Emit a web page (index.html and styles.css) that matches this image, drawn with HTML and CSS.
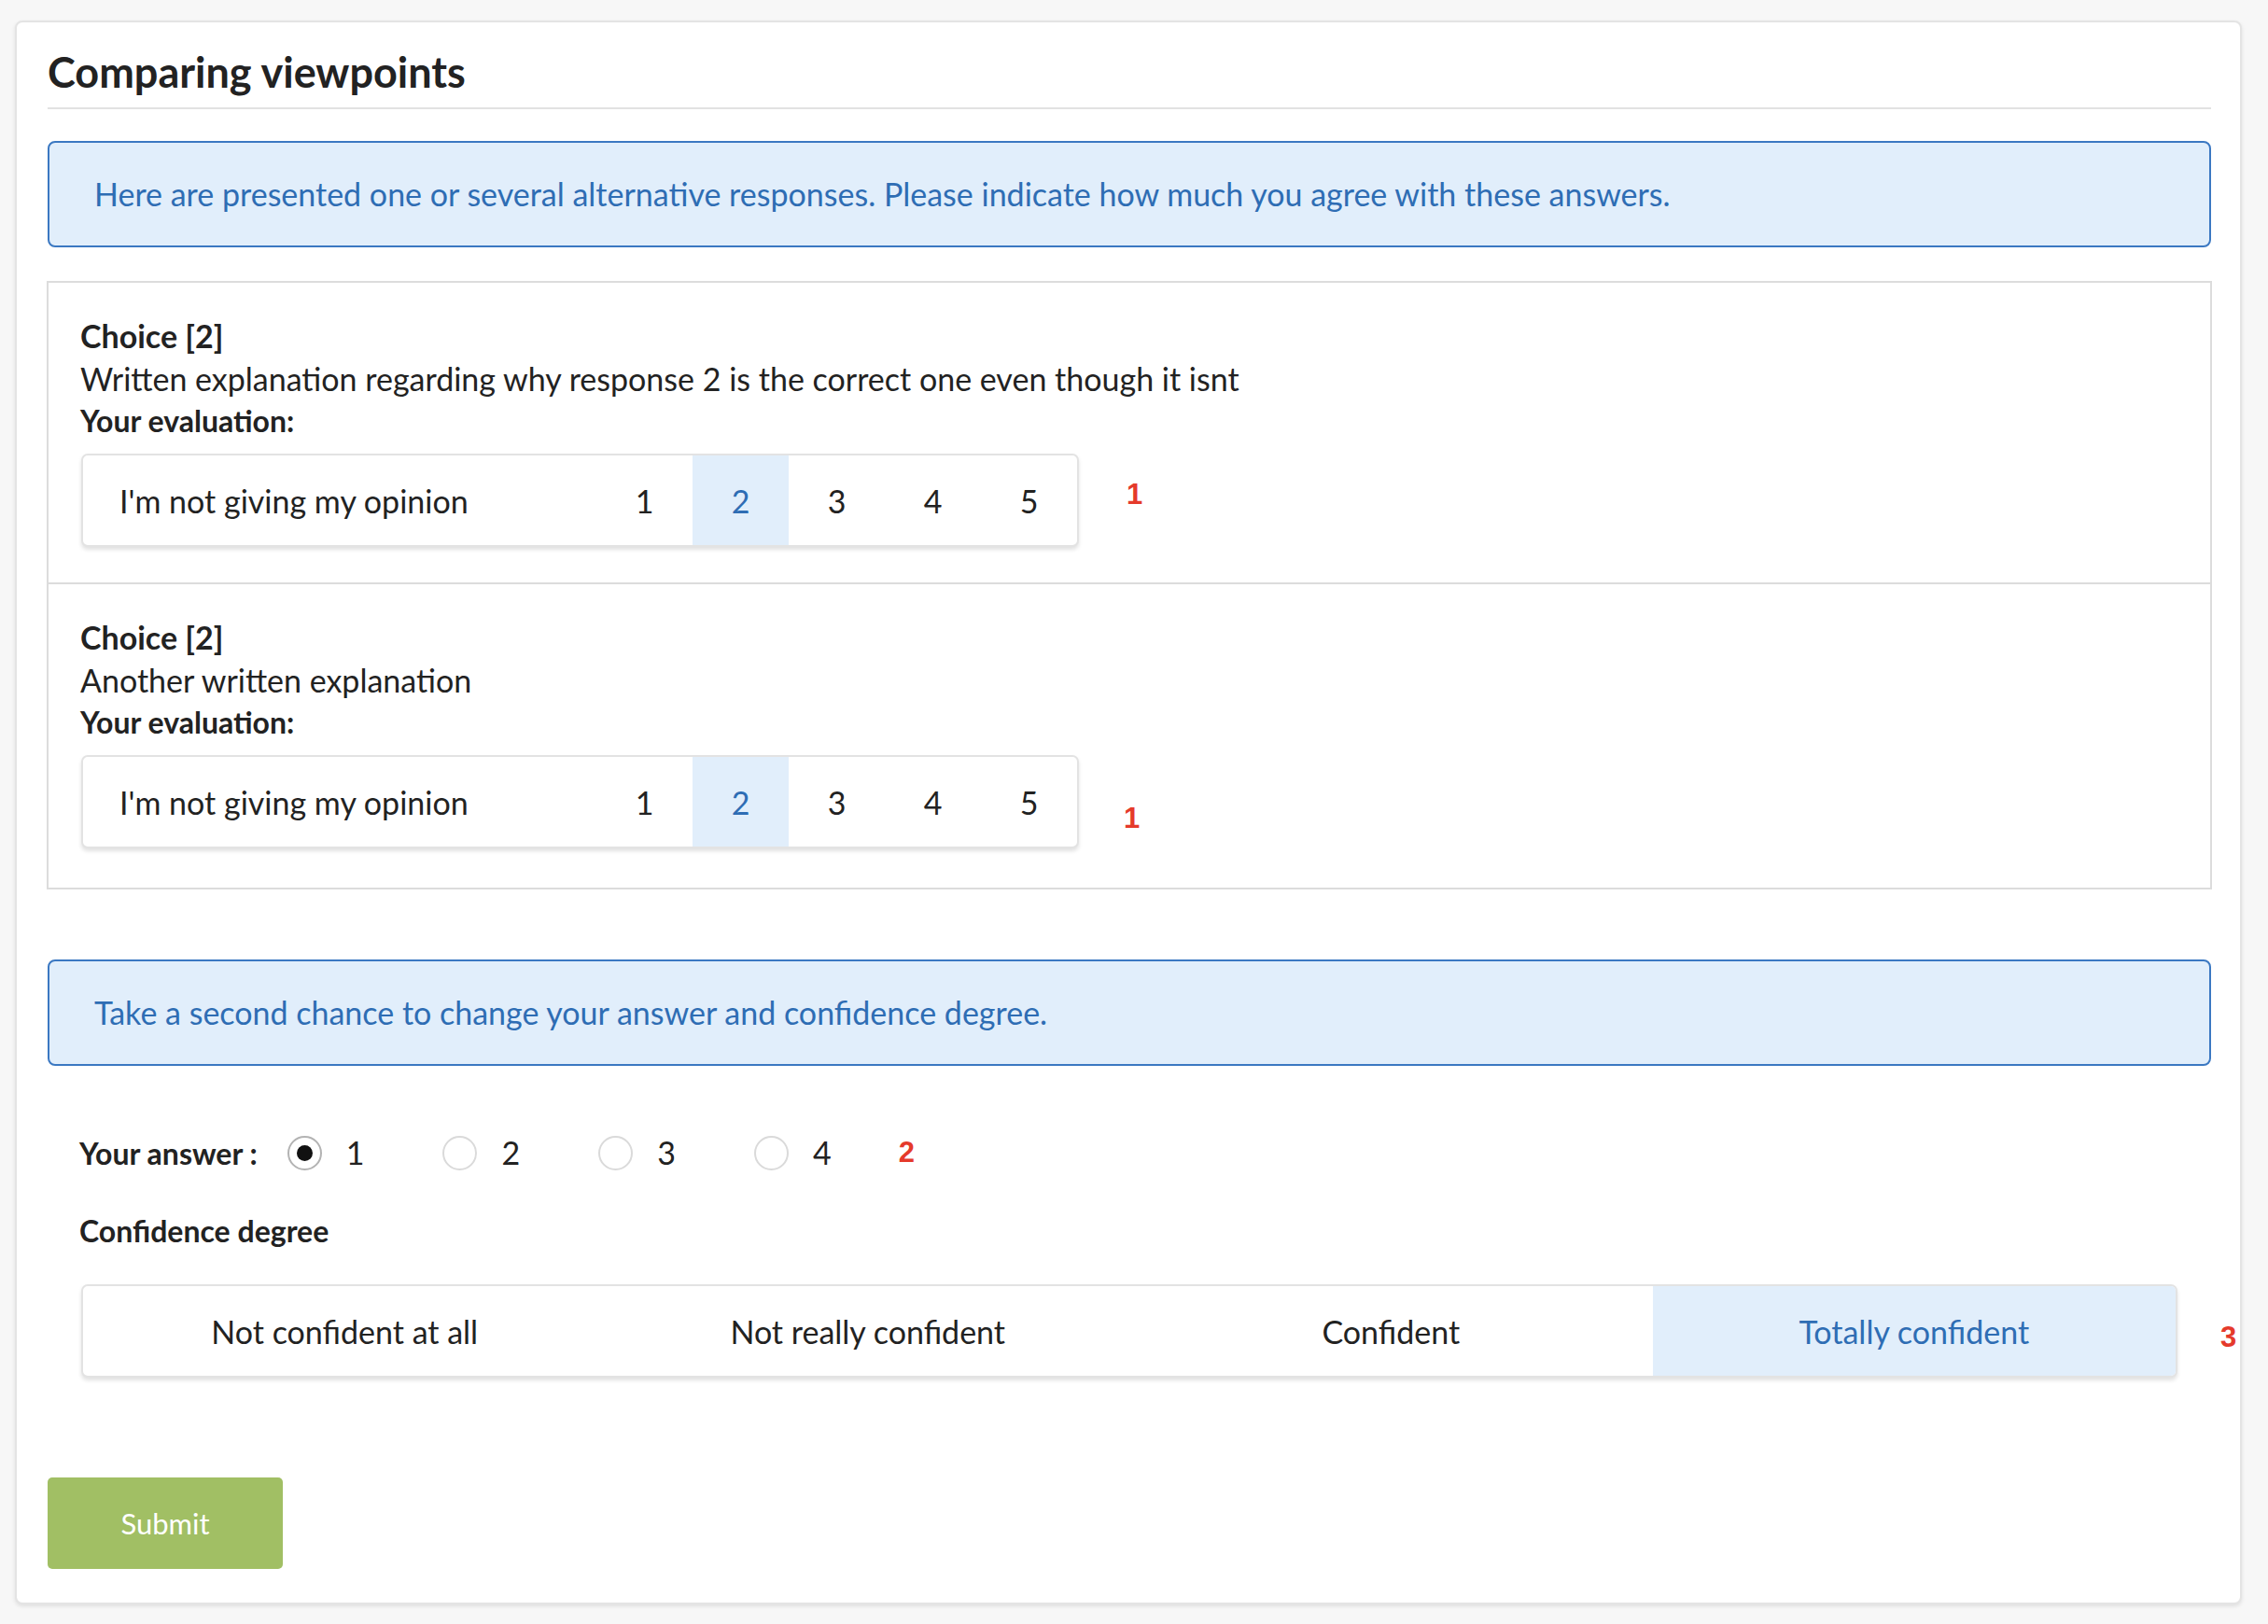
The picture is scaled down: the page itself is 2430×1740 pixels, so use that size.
FILE: index.html
```html
<!DOCTYPE html>
<html lang="en">
<head>
<meta charset="utf-8">
<title>Comparing viewpoints</title>
<link rel="stylesheet" href="styles.css">
</head>
<body>
<div class="card">
  <h2 class="title">Comparing viewpoints</h2>

  <div class="info">Here are presented one or several alternative responses. Please indicate how much you agree with these answers.</div>

  <div class="choices">
    <div class="choice">
      <div class="choice-name">Choice [2]</div>
      <div class="choice-text">Written explanation regarding why response 2 is the correct one even though it isnt</div>
      <div class="eval-label">Your evaluation:</div>
      <div class="eval-row">
        <div class="scale">
          <div class="scale-label">I'm not giving my opinion</div>
          <div class="scale-num">1</div>
          <div class="scale-num is-selected">2</div>
          <div class="scale-num">3</div>
          <div class="scale-num">4</div>
          <div class="scale-num">5</div>
        </div>
        <span class="mark mark-eval">1</span>
      </div>
    </div>
    <div class="choice">
      <div class="choice-name">Choice [2]</div>
      <div class="choice-text">Another written explanation</div>
      <div class="eval-label">Your evaluation:</div>
      <div class="eval-row">
        <div class="scale">
          <div class="scale-label">I'm not giving my opinion</div>
          <div class="scale-num">1</div>
          <div class="scale-num is-selected">2</div>
          <div class="scale-num">3</div>
          <div class="scale-num">4</div>
          <div class="scale-num">5</div>
        </div>
        <span class="mark mark-eval-low">1</span>
      </div>
    </div>
  </div>

  <div class="info info-second">Take a second chance to change your answer and confidence degree.</div>

  <div class="second">
    <div class="answer-row">
      <span class="answer-label">Your answer :</span>
      <label class="radio-item"><span class="radio is-checked"></span><span class="radio-num">1</span></label>
      <label class="radio-item"><span class="radio"></span><span class="radio-num">2</span></label>
      <label class="radio-item"><span class="radio"></span><span class="radio-num">3</span></label>
      <label class="radio-item"><span class="radio"></span><span class="radio-num">4</span></label>
      <span class="mark mark-answer">2</span>
    </div>

    <div class="conf-label">Confidence degree</div>

    <div class="conf-row">
      <div class="conf-scale">
        <div class="conf-cell">Not confident at all</div>
        <div class="conf-cell">Not really confident</div>
        <div class="conf-cell">Confident</div>
        <div class="conf-cell is-selected">Totally confident</div>
      </div>
      <span class="mark mark-conf">3</span>
    </div>
  </div>

  <button class="submit" type="button">Submit</button>
</div>
</body>
</html>
```

FILE: styles.css
```css
body {
  margin: 0;
  background: #f7f7f7;
  font-family: Lato, "Noto Sans", sans-serif;
  color: #222;
}

.card {
  margin: 22px 28px 25px 16px;
  background: #fff;
  border: 2px solid #e4e4e4;
  border-radius: 8px;
  padding: 26px 31px 36px 33px;
  box-shadow: 0 2px 4px rgba(0, 0, 0, 0.1);
}

.title {
  margin: 0;
  font-size: 45px;
  font-weight: 700;
  line-height: 55px;
  padding-bottom: 10px;
  border-bottom: 2px solid #e2e2e2;
}

.info {
  margin-top: 34px;
  border: 2px solid #3b78c2;
  border-radius: 8px;
  background: #e1eefb;
  color: #2e6db4;
  font-size: 34px;
  line-height: 42px;
  padding: 34px 48px;
}

.info-second {
  margin-top: 75px;
}

.choices {
  margin: 36px -1px 0;
  border: 2px solid #dcdcdc;
}

.choice {
  padding: 34px 34px 38px;
}

.choice + .choice {
  border-top: 2px solid #dcdcdc;
  padding-bottom: 42px;
}

.choice-name {
  font-size: 34px;
  font-weight: 700;
  line-height: 46px;
}

.choice-text {
  font-size: 34px;
  line-height: 46px;
}

.eval-label {
  font-size: 32px;
  font-weight: 700;
  line-height: 44px;
}

.eval-row {
  display: flex;
  align-items: flex-start;
  margin-top: 13px;
}

.scale,
.conf-scale {
  display: flex;
  box-sizing: border-box;
  height: 100px;
  border: 2px solid #e3e3e3;
  border-radius: 7px;
  box-shadow: 0 3px 4px rgba(0, 0, 0, 0.12);
  overflow: hidden;
  background: #fff;
  flex-shrink: 0;
}

.scale {
  margin-left: 1px;
}

.scale-label {
  width: 550px;
  box-sizing: border-box;
  padding-left: 39px;
  display: flex;
  align-items: center;
  font-size: 34px;
}

.scale-num {
  width: 103px;
  display: flex;
  align-items: center;
  justify-content: center;
  font-size: 34px;
}

.is-selected {
  background: #e1eefb;
  color: #2e6db4;
}

.mark {
  font-family: "Liberation Sans", Arial, sans-serif;
  font-weight: 700;
  font-size: 31px;
  line-height: 30px;
  color: #e53a2b;
  flex-shrink: 0;
}

.mark-eval {
  margin: 29px 0 0 51px;
}

.mark-eval-low {
  margin: 53px 0 0 48px;
}

.second {
  padding: 0 36px 0 34px;
}

.answer-row {
  display: flex;
  align-items: center;
  height: 46px;
  margin-top: 70px;
}

.answer-label {
  font-size: 32px;
  font-weight: 700;
  margin-right: 32px;
}

.radio-item {
  display: flex;
  align-items: center;
  margin-right: 84px;
}

.radio-item:last-of-type {
  margin-right: 0;
}

.radio {
  width: 37px;
  height: 37px;
  box-sizing: border-box;
  border: 2px solid #dadada;
  border-radius: 50%;
  margin-right: 26px;
  display: flex;
  align-items: center;
  justify-content: center;
}

.radio.is-checked {
  border-color: #b3b3b3;
}

.radio.is-checked::after {
  content: "";
  width: 17px;
  height: 17px;
  border-radius: 50%;
  background: #111;
}

.radio-num {
  font-size: 34px;
  line-height: 46px;
}

.mark-answer {
  margin-left: 72px;
}

.conf-label {
  font-size: 32px;
  font-weight: 700;
  line-height: 44px;
  margin-top: 39px;
}

.conf-row {
  display: flex;
  align-items: flex-start;
  margin-top: 35px;
}

.conf-scale {
  width: 2246px;
  margin-left: 2px;
}

.conf-cell {
  flex: 1;
  display: flex;
  align-items: center;
  justify-content: center;
  font-size: 34px;
}

.mark-conf {
  margin: 42px 0 0 46px;
}

.submit {
  display: block;
  margin-top: 107px;
  width: 252px;
  height: 98px;
  border: none;
  border-radius: 5px;
  background: #a1bf64;
  color: #fff;
  font-family: Lato, "Noto Sans", sans-serif;
  font-size: 31px;
  padding: 0;
}
```
